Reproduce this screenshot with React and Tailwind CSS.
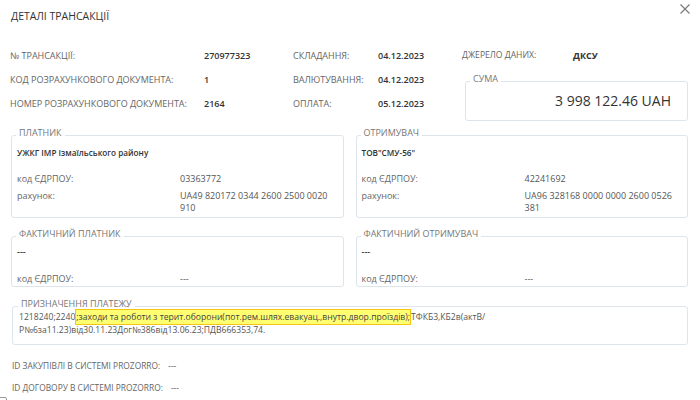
import React from "react";

function Legend({ children }) {
  return (
    <legend className="ml-[-1px] px-[3px] pb-[4px] text-[9px] leading-[12px] text-[#777]">
      {children}
    </legend>
  );
}

function Party({ title, name, code, account }) {
  return (
    <fieldset className="min-w-0 rounded-[3px] border border-[#dde4ec] px-[5px] pb-[3px] pt-[4px]">
      <Legend>{title}</Legend>
      <div className="text-[8.2px] font-semibold leading-[12px] text-[#333]">{name}</div>
      <div className="mt-[14px] grid grid-cols-[163px_1fr] leading-[12px]">
        <div className="text-[#666]">код ЄДРПОУ:</div>
        <div className="text-[#555]">{code}</div>
      </div>
      <div className="mt-[5px] grid grid-cols-[163px_1fr] leading-[12px]">
        <div className="text-[#666]">рахунок:</div>
        <div className="pr-[2px] text-[#555]">{account}</div>
      </div>
    </fieldset>
  );
}

function Actual({ title }) {
  return (
    <fieldset className="min-w-0 rounded-[3px] border border-[#dde4ec] px-[5px] pb-[1px] pt-[2px]">
      <Legend>{title}</Legend>
      <div className="font-semibold leading-[12px] text-[#333]">---</div>
      <div className="mt-[15px] grid grid-cols-[163px_1fr] leading-[12px]">
        <div className="text-[#666]">код ЄДРПОУ:</div>
        <div className="text-[#555]">---</div>
      </div>
    </fieldset>
  );
}

export default function App() {
  return (
    <div className="relative h-[400px] w-[700px] overflow-hidden bg-white pl-[10px] pr-[12px] font-['Open_Sans',sans-serif] text-[9px] text-[#555]">
      <div className="flex items-start justify-between pt-[8px]">
        <h1 className="ml-[1px] text-[10.5px] leading-[16px] text-[#333]">ДЕТАЛІ ТРАНСАКЦІЇ</h1>
        <svg
          className="mr-[-2px] mt-[-4px]"
          width="10"
          height="10"
          viewBox="0 0 10 10"
          fill="none"
          stroke="#777"
          strokeWidth="1.1"
        >
          <path d="M0.5 0.5L9.5 9.5M9.5 0.5L0.5 9.5" />
        </svg>
      </div>

      <div className="mt-[20px] grid auto-rows-[24px] grid-cols-[194px_89px_85px_84px_1fr] items-center">
        <div className="text-[#666]">№ ТРАНСАКЦІЇ:</div>
        <div className="font-semibold text-[#333]">270977323</div>
        <div className="text-[#666]">СКЛАДАННЯ:</div>
        <div className="font-semibold text-[#333]">04.12.2023</div>
        <div className="flex">
          <div className="w-[111px] text-[8.6px] text-[#666]">ДЖЕРЕЛО ДАНИХ:</div>
          <div className="font-bold text-[#333]">ДКСУ</div>
        </div>

        <div className="text-[#666]">КОД РОЗРАХУНКОВОГО ДОКУМЕНТА:</div>
        <div className="font-semibold text-[#333]">1</div>
        <div className="text-[#666]">ВАЛЮТУВАННЯ:</div>
        <div className="font-semibold text-[#333]">04.12.2023</div>
        <fieldset className="row-span-2 ml-[3px] mt-[5px] self-start rounded-[3px] border border-[#dde4ec] pb-[10px] pl-[5px] pr-[16px] pt-[3px]">
          <Legend>СУМА</Legend>
          <div className="text-right text-[14px] leading-[18px] text-[#333]">3 998 122.46 UAH</div>
        </fieldset>

        <div className="text-[#666]">НОМЕР РОЗРАХУНКОВОГО ДОКУМЕНТА:</div>
        <div className="font-semibold text-[#333]">2164</div>
        <div className="text-[#666]">ОПЛАТА:</div>
        <div className="font-semibold text-[#333]">05.12.2023</div>
      </div>

      <div className="ml-[1px] mt-[11px] grid grid-cols-2 gap-x-[12px] gap-y-[10px]">
        <Party
          title="ПЛАТНИК"
          name="УЖКГ ІМР Ізмаїльського району"
          code="03363772"
          account="UA49 820172 0344 2600 2500 0020 910"
        />
        <Party
          title="ОТРИМУВАЧ"
          name={'ТОВ"СМУ-56"'}
          code="42241692"
          account="UA96 328168 0000 0000 2600 0526 381"
        />
        <Actual title="ФАКТИЧНИЙ ПЛАТНИК" />
        <Actual title="ФАКТИЧНИЙ ОТРИМУВАЧ" />
      </div>

      <fieldset className="ml-[2px] mt-[11px] rounded-[3px] border border-[#dde4ec] pb-[7px] pl-[6px] pr-[6px]">
        <Legend>ПРИЗНАЧЕННЯ ПЛАТЕЖУ</Legend>
        <div className="mt-[-3px] text-[8.6px] leading-[13px] text-[#555]">
          1218240;2240
          <span className="border border-[#f3c614] bg-[#ffff72] py-[1px] text-[#444]">
            ;заходи та роботи з терит.оборони(пот.рем.шлях.евакуац.,внутр.двор.проїздів);
          </span>
          ТФКБ3,КБ2в(актВ/
          <br />
          Р№6за11.23)від30.11.23Дог№386від13.06.23;ПДВ666353,74.
        </div>
      </fieldset>

      <div className="ml-[2px] mt-[15px] flex gap-[8px] text-[8.4px] leading-[12px]">
        <span className="text-[#666]">ID ЗАКУПІВЛІ В СИСТЕМІ PROZORRO:</span>
        <span className="text-[#555]">---</span>
      </div>
      <div className="ml-[2px] mt-[10px] flex gap-[8px] text-[8.4px] leading-[12px]">
        <span className="text-[#666]">ID ДОГОВОРУ В СИСТЕМІ PROZORRO:</span>
        <span className="text-[#555]">---</span>
      </div>

      <div className="absolute left-[-3px] top-[397px] h-[10px] w-[10px] rounded-[2px] border border-[#999]" />
    </div>
  );
}
